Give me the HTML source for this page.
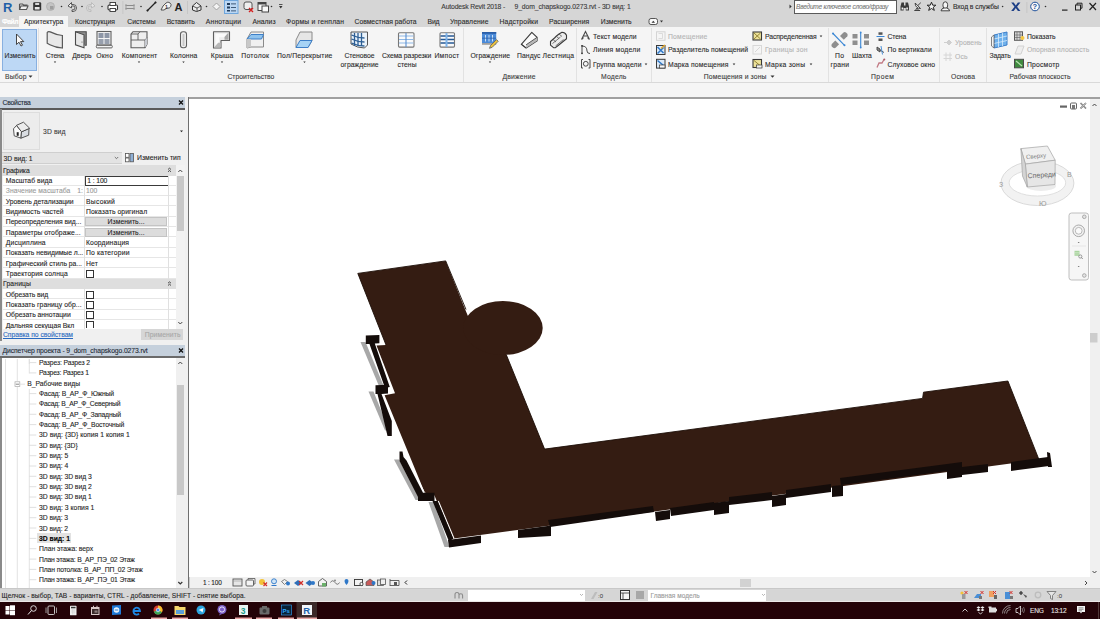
<!DOCTYPE html>
<html><head><meta charset="utf-8"><style>
html,body{margin:0;padding:0;}
body{width:1100px;height:619px;overflow:hidden;position:relative;background:#f0f0f0;font-family:"Liberation Sans",sans-serif;}
.t{position:absolute;white-space:nowrap;-webkit-text-stroke:0.1px currentColor;}
.r{position:absolute;}
</style></head><body>
<div class="r" style="left:0px;top:0px;width:1100px;height:27px;background:#d6d6d6;"></div>
<div class="r" style="left:19px;top:16px;width:49px;height:11px;background:#f5f5f5;"></div>
<div class="r" style="left:0px;top:27px;width:1100px;height:56px;background:#f5f5f5;"></div>
<div class="r" style="left:0px;top:82px;width:1100px;height:1px;background:#d9d9d9;"></div>
<div class="r" style="left:0px;top:83px;width:1100px;height:14px;background:#f5f5f5;"></div>
<div class="r" style="left:0px;top:97px;width:188px;height:491px;background:#f0f0f0;"></div>
<div class="r" style="left:0px;top:97px;width:185px;height:12px;background:#c5d0dc;"></div>
<div class="r" style="left:0px;top:340px;width:185px;height:5px;background:#f0f0f0;"></div>
<div class="r" style="left:0px;top:345px;width:185px;height:11.5px;background:#c5d0dc;"></div>
<div class="r" style="left:188px;top:97px;width:912px;height:491px;background:#ffffff;"></div>
<div class="r" style="left:188px;top:97px;width:912px;height:2px;background:#a0a0a0;"></div>
<div class="r" style="left:188px;top:97px;width:1.3px;height:491px;background:#6e6e6e;"></div>
<div class="r" style="left:1090px;top:99px;width:10px;height:480px;background:#f0f0f0;"></div>
<div class="r" style="left:189px;top:577px;width:911px;height:11px;background:#f0f0f0;"></div>
<div class="r" style="left:0px;top:588px;width:1100px;height:14px;background:#d6d6d6;"></div>
<div class="r" style="left:0px;top:600.5px;width:1100px;height:1.5px;background:#ece8e8;"></div>
<div class="r" style="left:0px;top:588px;width:1100px;height:1px;background:#c8c8c8;"></div>
<div class="r" style="left:0px;top:602px;width:1100px;height:17px;background:#240308;"></div>
<div class="t" style="left:441.25px;top:4.46px;font-size:6.8px;line-height:6.8px;color:#3a3a3a;font-weight:normal;font-style:normal;letter-spacing:-0.144px;">Autodesk Revit 2018 -</div>
<div class="t" style="left:514.5px;top:4.46px;font-size:6.8px;line-height:6.8px;color:#3a3a3a;font-weight:normal;font-style:normal;letter-spacing:-0.093px;">9_dom_chapskogo.0273.rvt - 3D вид: 1</div>
<div class="r" style="left:794px;top:0px;width:103px;height:13.5px;background:#ffffff;box-sizing:border-box;border:1px solid #5a5a5a;"></div>
<div class="t" style="left:796px;top:4.42px;font-size:6.5px;line-height:6.5px;color:#777777;font-weight:normal;font-style:italic;letter-spacing:-0.195px;">Введите ключевое слово/фразу</div>
<div class="t" style="left:953px;top:4.46px;font-size:6.8px;line-height:6.8px;color:#2a2a2a;font-weight:normal;font-style:normal;letter-spacing:-0.090px;">Вход в службы</div>
<div class="t" style="left:2px;top:18.96px;font-size:6.8px;line-height:6.8px;color:#ffffff;font-weight:bold;font-style:normal;letter-spacing:-0.495px;">Файл</div>
<div class="t" style="left:24px;top:18.96px;font-size:6.8px;line-height:6.8px;color:#2b2b2b;font-weight:normal;font-style:normal;letter-spacing:-0.007px;">Архитектура</div>
<div class="t" style="left:75px;top:18.96px;font-size:6.8px;line-height:6.8px;color:#2b2b2b;font-weight:normal;font-style:normal;letter-spacing:0.059px;">Конструкция</div>
<div class="t" style="left:127.3px;top:18.96px;font-size:6.8px;line-height:6.8px;color:#2b2b2b;font-weight:normal;font-style:normal;letter-spacing:-0.026px;">Системы</div>
<div class="t" style="left:166.7px;top:18.96px;font-size:6.8px;line-height:6.8px;color:#2b2b2b;font-weight:normal;font-style:normal;letter-spacing:-0.114px;">Вставить</div>
<div class="t" style="left:205.8px;top:18.96px;font-size:6.8px;line-height:6.8px;color:#2b2b2b;font-weight:normal;font-style:normal;letter-spacing:0.146px;">Аннотации</div>
<div class="t" style="left:252.4px;top:18.96px;font-size:6.8px;line-height:6.8px;color:#2b2b2b;font-weight:normal;font-style:normal;letter-spacing:0.041px;">Анализ</div>
<div class="t" style="left:286px;top:18.96px;font-size:6.8px;line-height:6.8px;color:#2b2b2b;font-weight:normal;font-style:normal;letter-spacing:0.230px;">Формы и генплан</div>
<div class="t" style="left:354.5px;top:18.96px;font-size:6.8px;line-height:6.8px;color:#2b2b2b;font-weight:normal;font-style:normal;letter-spacing:-0.006px;">Совместная работа</div>
<div class="t" style="left:427.5px;top:18.96px;font-size:6.8px;line-height:6.8px;color:#2b2b2b;font-weight:normal;font-style:normal;letter-spacing:-0.149px;">Вид</div>
<div class="t" style="left:450px;top:18.96px;font-size:6.8px;line-height:6.8px;color:#2b2b2b;font-weight:normal;font-style:normal;letter-spacing:0.080px;">Управление</div>
<div class="t" style="left:499.5px;top:18.96px;font-size:6.8px;line-height:6.8px;color:#2b2b2b;font-weight:normal;font-style:normal;letter-spacing:0.130px;">Надстройки</div>
<div class="t" style="left:549px;top:18.96px;font-size:6.8px;line-height:6.8px;color:#2b2b2b;font-weight:normal;font-style:normal;letter-spacing:0.082px;">Расширения</div>
<div class="t" style="left:600.75px;top:18.96px;font-size:6.8px;line-height:6.8px;color:#2b2b2b;font-weight:normal;font-style:normal;letter-spacing:0.022px;">Изменить</div>
<div class="t" style="left:5.1px;top:73.96px;font-size:6.8px;line-height:6.8px;color:#3c3c3c;font-weight:normal;font-style:normal;letter-spacing:0.125px;">Выбор</div>
<div class="t" style="left:227.5px;top:73.96px;font-size:6.8px;line-height:6.8px;color:#3c3c3c;font-weight:normal;font-style:normal;letter-spacing:-0.036px;">Строительство</div>
<div class="t" style="left:502.5px;top:73.96px;font-size:6.8px;line-height:6.8px;color:#3c3c3c;font-weight:normal;font-style:normal;letter-spacing:0.179px;">Движение</div>
<div class="t" style="left:601px;top:73.96px;font-size:6.8px;line-height:6.8px;color:#3c3c3c;font-weight:normal;font-style:normal;letter-spacing:0.199px;">Модель</div>
<div class="t" style="left:703.75px;top:73.96px;font-size:6.8px;line-height:6.8px;color:#3c3c3c;font-weight:normal;font-style:normal;letter-spacing:0.135px;">Помещения и зоны</div>
<div class="t" style="left:871px;top:73.96px;font-size:6.8px;line-height:6.8px;color:#3c3c3c;font-weight:normal;font-style:normal;letter-spacing:0.489px;">Проем</div>
<div class="t" style="left:951px;top:73.96px;font-size:6.8px;line-height:6.8px;color:#3c3c3c;font-weight:normal;font-style:normal;letter-spacing:0.092px;">Основа</div>
<div class="t" style="left:1009.5px;top:73.96px;font-size:6.8px;line-height:6.8px;color:#3c3c3c;font-weight:normal;font-style:normal;letter-spacing:0.047px;">Рабочая плоскость</div>
<div class="r" style="left:38px;top:28px;width:1px;height:54px;background:#e2e2e2;"></div>
<div class="r" style="left:462.5px;top:28px;width:1px;height:54px;background:#e2e2e2;"></div>
<div class="r" style="left:576px;top:28px;width:1px;height:54px;background:#e2e2e2;"></div>
<div class="r" style="left:651px;top:28px;width:1px;height:54px;background:#e2e2e2;"></div>
<div class="r" style="left:827.5px;top:28px;width:1px;height:54px;background:#e2e2e2;"></div>
<div class="r" style="left:938.5px;top:28px;width:1px;height:54px;background:#e2e2e2;"></div>
<div class="r" style="left:986px;top:28px;width:1px;height:54px;background:#e2e2e2;"></div>
<div class="r" style="left:2px;top:29px;width:35px;height:41.5px;background:#bdd8f5;box-sizing:border-box;border:1px solid #88b0e0;"></div>
<div class="t" style="left:4.5px;top:52.96px;font-size:6.8px;line-height:6.8px;color:#2b2b2b;font-weight:normal;font-style:normal;letter-spacing:0.054px;">Изменить</div>
<div class="t" style="left:45.8px;top:52.96px;font-size:6.8px;line-height:6.8px;color:#2b2b2b;font-weight:normal;font-style:normal;letter-spacing:-0.173px;">Стена</div>
<div class="t" style="left:72.2px;top:52.96px;font-size:6.8px;line-height:6.8px;color:#2b2b2b;font-weight:normal;font-style:normal;letter-spacing:0.030px;">Дверь</div>
<div class="t" style="left:96.3px;top:52.96px;font-size:6.8px;line-height:6.8px;color:#2b2b2b;font-weight:normal;font-style:normal;letter-spacing:0.276px;">Окно</div>
<div class="t" style="left:121.75px;top:52.96px;font-size:6.8px;line-height:6.8px;color:#2b2b2b;font-weight:normal;font-style:normal;letter-spacing:0.147px;">Компонент</div>
<div class="t" style="left:170px;top:52.96px;font-size:6.8px;line-height:6.8px;color:#2b2b2b;font-weight:normal;font-style:normal;letter-spacing:0.092px;">Колонна</div>
<div class="t" style="left:210.75px;top:52.96px;font-size:6.8px;line-height:6.8px;color:#2b2b2b;font-weight:normal;font-style:normal;letter-spacing:0.198px;">Крыша</div>
<div class="t" style="left:241.25px;top:52.96px;font-size:6.8px;line-height:6.8px;color:#2b2b2b;font-weight:normal;font-style:normal;letter-spacing:0.302px;">Потолок</div>
<div class="t" style="left:277px;top:52.96px;font-size:6.8px;line-height:6.8px;color:#2b2b2b;font-weight:normal;font-style:normal;letter-spacing:0.190px;">Пол/Перекрытие</div>
<div class="t" style="left:434.5px;top:52.96px;font-size:6.8px;line-height:6.8px;color:#2b2b2b;font-weight:normal;font-style:normal;letter-spacing:0.220px;">Импост</div>
<div class="t" style="left:470.5px;top:52.96px;font-size:6.8px;line-height:6.8px;color:#2b2b2b;font-weight:normal;font-style:normal;letter-spacing:0.065px;">Ограждение</div>
<div class="t" style="left:517px;top:52.96px;font-size:6.8px;line-height:6.8px;color:#2b2b2b;font-weight:normal;font-style:normal;letter-spacing:0.082px;">Пандус</div>
<div class="t" style="left:542.5px;top:52.96px;font-size:6.8px;line-height:6.8px;color:#2b2b2b;font-weight:normal;font-style:normal;letter-spacing:0.233px;">Лестница</div>
<div class="t" style="left:852px;top:52.96px;font-size:6.8px;line-height:6.8px;color:#2b2b2b;font-weight:normal;font-style:normal;letter-spacing:-0.061px;">Шахта</div>
<div class="t" style="left:989.5px;top:52.96px;font-size:6.8px;line-height:6.8px;color:#2b2b2b;font-weight:normal;font-style:normal;letter-spacing:-0.173px;">Задать</div>
<div class="t" style="left:344.5px;top:52.96px;font-size:6.8px;line-height:6.8px;color:#2b2b2b;font-weight:normal;font-style:normal;letter-spacing:-0.064px;">Стеновое</div>
<div class="t" style="left:340.5px;top:61.96px;font-size:6.8px;line-height:6.8px;color:#2b2b2b;font-weight:normal;font-style:normal;letter-spacing:0.065px;">ограждение</div>
<div class="t" style="left:382px;top:52.96px;font-size:6.8px;line-height:6.8px;color:#2b2b2b;font-weight:normal;font-style:normal;letter-spacing:-0.082px;">Схема разрезки</div>
<div class="t" style="left:397.5px;top:61.96px;font-size:6.8px;line-height:6.8px;color:#2b2b2b;font-weight:normal;font-style:normal;letter-spacing:0.048px;">стены</div>
<div class="t" style="left:835px;top:52.96px;font-size:6.8px;line-height:6.8px;color:#2b2b2b;font-weight:normal;font-style:normal;letter-spacing:0.339px;">По</div>
<div class="t" style="left:830.5px;top:61.96px;font-size:6.8px;line-height:6.8px;color:#2b2b2b;font-weight:normal;font-style:normal;letter-spacing:0.251px;">грани</div>
<div class="t" style="left:593px;top:33.76px;font-size:6.8px;line-height:6.8px;color:#2b2b2b;font-weight:normal;font-style:normal;letter-spacing:0.084px;">Текст модели</div>
<div class="t" style="left:593px;top:47.46px;font-size:6.8px;line-height:6.8px;color:#2b2b2b;font-weight:normal;font-style:normal;letter-spacing:0.202px;">Линия  модели</div>
<div class="t" style="left:593px;top:61.76px;font-size:6.8px;line-height:6.8px;color:#2b2b2b;font-weight:normal;font-style:normal;letter-spacing:0.121px;">Группа модели</div>
<div class="t" style="left:668px;top:33.76px;font-size:6.8px;line-height:6.8px;color:#b4b4b4;font-weight:normal;font-style:normal;letter-spacing:0.206px;">Помещение</div>
<div class="t" style="left:668px;top:47.46px;font-size:6.8px;line-height:6.8px;color:#2b2b2b;font-weight:normal;font-style:normal;letter-spacing:0.061px;">Разделитель помещений</div>
<div class="t" style="left:668px;top:61.76px;font-size:6.8px;line-height:6.8px;color:#2b2b2b;font-weight:normal;font-style:normal;letter-spacing:0.138px;">Марка помещения</div>
<div class="t" style="left:765px;top:33.76px;font-size:6.8px;line-height:6.8px;color:#2b2b2b;font-weight:normal;font-style:normal;letter-spacing:-0.087px;">Распределенная</div>
<div class="t" style="left:765px;top:47.46px;font-size:6.8px;line-height:6.8px;color:#b4b4b4;font-weight:normal;font-style:normal;letter-spacing:0.287px;">Границы  зон</div>
<div class="t" style="left:765px;top:61.76px;font-size:6.8px;line-height:6.8px;color:#2b2b2b;font-weight:normal;font-style:normal;letter-spacing:0.276px;">Марка  зоны</div>
<div class="t" style="left:887.5px;top:33.76px;font-size:6.8px;line-height:6.8px;color:#2b2b2b;font-weight:normal;font-style:normal;letter-spacing:-0.133px;">Стена</div>
<div class="t" style="left:887.5px;top:47.46px;font-size:6.8px;line-height:6.8px;color:#2b2b2b;font-weight:normal;font-style:normal;letter-spacing:0.106px;">По вертикали</div>
<div class="t" style="left:887.5px;top:61.76px;font-size:6.8px;line-height:6.8px;color:#2b2b2b;font-weight:normal;font-style:normal;letter-spacing:0.073px;">Слуховое окно</div>
<div class="t" style="left:955px;top:40.46px;font-size:6.8px;line-height:6.8px;color:#b4b4b4;font-weight:normal;font-style:normal;letter-spacing:0.059px;">Уровень</div>
<div class="t" style="left:955px;top:54.46px;font-size:6.8px;line-height:6.8px;color:#b4b4b4;font-weight:normal;font-style:normal;letter-spacing:0.122px;">Ось</div>
<div class="t" style="left:1027px;top:33.76px;font-size:6.8px;line-height:6.8px;color:#2b2b2b;font-weight:normal;font-style:normal;letter-spacing:-0.038px;">Показать</div>
<div class="t" style="left:1027px;top:47.46px;font-size:6.8px;line-height:6.8px;color:#b4b4b4;font-weight:normal;font-style:normal;letter-spacing:0.055px;">Опорная плоскость</div>
<div class="t" style="left:1027px;top:61.76px;font-size:6.8px;line-height:6.8px;color:#2b2b2b;font-weight:normal;font-style:normal;letter-spacing:0.194px;">Просмотр</div>
<div class="t" style="left:2.5px;top:100.46px;font-size:6.8px;line-height:6.8px;color:#1e2a36;font-weight:normal;font-style:normal;letter-spacing:-0.220px;">Свойства</div>
<div class="r" style="left:0px;top:108px;width:185px;height:1.5px;background:#5a5a5a;"></div>
<div class="r" style="left:0px;top:109px;width:1.5px;height:232px;background:#8a8a8a;"></div>
<div class="r" style="left:1.5px;top:109.5px;width:183.5px;height:42.5px;background:#f0f0f0;"></div>
<div class="r" style="left:3px;top:112px;width:37px;height:37.5px;background:#ececec;box-sizing:border-box;border:1px solid #dddddd;"></div>
<div class="t" style="left:43px;top:128.96px;font-size:6.8px;line-height:6.8px;color:#3a3a3a;font-weight:normal;font-style:normal;letter-spacing:0.108px;">3D вид</div>
<div class="r" style="left:1.5px;top:152px;width:120px;height:12px;background:#e3e3e3;box-sizing:border-box;border-top:1px solid #cfcfcf;border-bottom:1px solid #cfcfcf;"></div>
<div class="t" style="left:3.5px;top:155.96px;font-size:6.8px;line-height:6.8px;color:#1e1e1e;font-weight:normal;font-style:normal;letter-spacing:-0.046px;">3D вид: 1</div>
<div class="t" style="left:137px;top:155.46px;font-size:6.8px;line-height:6.8px;color:#1e1e1e;font-weight:normal;font-style:normal;letter-spacing:0.038px;">Изменить тип</div>
<div class="r" style="left:1.5px;top:165px;width:175px;height:10.5px;background:#dedede;"></div>
<div class="t" style="left:3px;top:167.96px;font-size:6.8px;line-height:6.8px;color:#1e1e1e;font-weight:normal;font-style:normal;letter-spacing:-0.079px;">Графика</div>
<div class="r" style="left:3px;top:175.5px;width:173px;height:103.0px;background:#ffffff;"></div>
<div class="r" style="left:3px;top:184.8px;width:173px;height:1px;background:#e6e6e6;"></div>
<div class="t" style="left:5.8px;top:178.11px;font-size:6.8px;line-height:6.8px;color:#1e1e1e;font-weight:normal;font-style:normal;letter-spacing:0.031px;">Масштаб вида</div>
<div class="t" style="left:87.2px;top:178.11px;font-size:6.8px;line-height:6.8px;color:#1e1e1e;font-weight:normal;font-style:normal;letter-spacing:-0.100px;">1 : 100</div>
<div class="r" style="left:3px;top:195.10000000000002px;width:173px;height:1px;background:#e6e6e6;"></div>
<div class="t" style="left:5.8px;top:188.41px;font-size:6.8px;line-height:6.8px;color:#9a9a9a;font-weight:normal;font-style:normal;letter-spacing:0.055px;">Значение масштаба</div>
<div class="t" style="left:86px;top:188.41px;font-size:6.8px;line-height:6.8px;color:#9a9a9a;font-weight:normal;font-style:normal;letter-spacing:-0.048px;">100</div>
<div class="r" style="left:3px;top:205.4px;width:173px;height:1px;background:#e6e6e6;"></div>
<div class="t" style="left:5.8px;top:198.71px;font-size:6.8px;line-height:6.8px;color:#1e1e1e;font-weight:normal;font-style:normal;letter-spacing:-0.040px;">Уровень детализации</div>
<div class="t" style="left:86px;top:198.71px;font-size:6.8px;line-height:6.8px;color:#1e1e1e;font-weight:normal;font-style:normal;letter-spacing:0.264px;">Высокий</div>
<div class="r" style="left:3px;top:215.70000000000002px;width:173px;height:1px;background:#e6e6e6;"></div>
<div class="t" style="left:5.8px;top:209.01px;font-size:6.8px;line-height:6.8px;color:#1e1e1e;font-weight:normal;font-style:normal;letter-spacing:-0.002px;">Видимость частей</div>
<div class="t" style="left:86px;top:209.01px;font-size:6.8px;line-height:6.8px;color:#1e1e1e;font-weight:normal;font-style:normal;letter-spacing:0.075px;">Показать оригинал</div>
<div class="r" style="left:3px;top:226.0px;width:173px;height:1px;background:#e6e6e6;"></div>
<div class="t" style="left:5.8px;top:219.31px;font-size:6.8px;line-height:6.8px;color:#1e1e1e;font-weight:normal;font-style:normal;letter-spacing:-0.047px;">Переопределения вид...</div>
<div class="r" style="left:85px;top:217.2px;width:82px;height:9.3px;background:#dcdcdc;box-sizing:border-box;border:1px solid #c4c4c4;"></div>
<div class="t" style="left:107.5px;top:219.31px;font-size:6.8px;line-height:6.8px;color:#1e1e1e;font-weight:normal;font-style:normal;letter-spacing:0.070px;">Изменить...</div>
<div class="r" style="left:3px;top:236.3px;width:173px;height:1px;background:#e6e6e6;"></div>
<div class="t" style="left:5.8px;top:229.61px;font-size:6.8px;line-height:6.8px;color:#1e1e1e;font-weight:normal;font-style:normal;letter-spacing:0.042px;">Параметры отображе...</div>
<div class="r" style="left:85px;top:227.5px;width:82px;height:9.3px;background:#dcdcdc;box-sizing:border-box;border:1px solid #c4c4c4;"></div>
<div class="t" style="left:107.5px;top:229.61px;font-size:6.8px;line-height:6.8px;color:#1e1e1e;font-weight:normal;font-style:normal;letter-spacing:0.070px;">Изменить...</div>
<div class="r" style="left:3px;top:246.60000000000002px;width:173px;height:1px;background:#e6e6e6;"></div>
<div class="t" style="left:5.8px;top:239.91px;font-size:6.8px;line-height:6.8px;color:#1e1e1e;font-weight:normal;font-style:normal;letter-spacing:0.153px;">Дисциплина</div>
<div class="t" style="left:86px;top:239.91px;font-size:6.8px;line-height:6.8px;color:#1e1e1e;font-weight:normal;font-style:normal;letter-spacing:0.117px;">Координация</div>
<div class="r" style="left:3px;top:256.90000000000003px;width:173px;height:1px;background:#e6e6e6;"></div>
<div class="t" style="left:5.8px;top:250.21px;font-size:6.8px;line-height:6.8px;color:#1e1e1e;font-weight:normal;font-style:normal;letter-spacing:-0.041px;">Показать невидимые л...</div>
<div class="t" style="left:86px;top:250.21px;font-size:6.8px;line-height:6.8px;color:#1e1e1e;font-weight:normal;font-style:normal;letter-spacing:0.166px;">По категории</div>
<div class="r" style="left:3px;top:267.2px;width:173px;height:1px;background:#e6e6e6;"></div>
<div class="t" style="left:5.8px;top:260.51px;font-size:6.8px;line-height:6.8px;color:#1e1e1e;font-weight:normal;font-style:normal;letter-spacing:-0.007px;">Графический стиль ра...</div>
<div class="t" style="left:86px;top:260.51px;font-size:6.8px;line-height:6.8px;color:#1e1e1e;font-weight:normal;font-style:normal;letter-spacing:0.107px;">Нет</div>
<div class="r" style="left:3px;top:277.5px;width:173px;height:1px;background:#e6e6e6;"></div>
<div class="t" style="left:5.8px;top:270.81px;font-size:6.8px;line-height:6.8px;color:#1e1e1e;font-weight:normal;font-style:normal;letter-spacing:0.081px;">Траектория солнца</div>
<div class="r" style="left:86px;top:269.7px;width:8px;height:8px;background:#ffffff;box-sizing:border-box;border:1px solid #333333;"></div>
<div class="t" style="left:77.3px;top:188.41px;font-size:6.8px;line-height:6.8px;color:#9a9a9a;font-weight:normal;font-style:normal;letter-spacing:-0.186px;">1:</div>
<div class="r" style="left:85px;top:176px;width:83.5px;height:10px;background:transparent;box-sizing:border-box;border:1.5px solid #3a3a3a;"></div>
<div class="r" style="left:84px;top:175.5px;width:1px;height:103.0px;background:#e0e0e0;"></div>
<div class="r" style="left:168px;top:175.5px;width:1px;height:103.0px;background:#e0e0e0;"></div>
<div class="r" style="left:1.5px;top:278.5px;width:175px;height:10.5px;background:#dedede;"></div>
<div class="t" style="left:3px;top:281.46px;font-size:6.8px;line-height:6.8px;color:#1e1e1e;font-weight:normal;font-style:normal;letter-spacing:0.130px;">Границы</div>
<div class="r" style="left:3px;top:289.0px;width:173px;height:39.5px;background:#ffffff;"></div>
<div class="r" style="left:3px;top:298.3px;width:173px;height:1px;background:#e6e6e6;"></div>
<div class="t" style="left:5.8px;top:291.61px;font-size:6.8px;line-height:6.8px;color:#1e1e1e;font-weight:normal;font-style:normal;letter-spacing:-0.080px;">Обрезать вид</div>
<div class="r" style="left:86px;top:290.5px;width:8px;height:8px;background:#ffffff;box-sizing:border-box;border:1px solid #333333;"></div>
<div class="r" style="left:3px;top:308.6px;width:173px;height:1px;background:#e6e6e6;"></div>
<div class="t" style="left:5.8px;top:301.91px;font-size:6.8px;line-height:6.8px;color:#1e1e1e;font-weight:normal;font-style:normal;letter-spacing:0.049px;">Показать границу обр...</div>
<div class="r" style="left:86px;top:300.8px;width:8px;height:8px;background:#ffffff;box-sizing:border-box;border:1px solid #333333;"></div>
<div class="r" style="left:3px;top:318.90000000000003px;width:173px;height:1px;background:#e6e6e6;"></div>
<div class="t" style="left:5.8px;top:312.21px;font-size:6.8px;line-height:6.8px;color:#1e1e1e;font-weight:normal;font-style:normal;letter-spacing:-0.012px;">Обрезать аннотации</div>
<div class="r" style="left:86px;top:311.1px;width:8px;height:8px;background:#ffffff;box-sizing:border-box;border:1px solid #333333;"></div>
<div class="t" style="left:5.8px;top:322.51px;font-size:6.8px;line-height:6.8px;color:#1e1e1e;font-weight:normal;font-style:normal;letter-spacing:-0.038px;">Дальняя секущая Вкл</div>
<div class="r" style="left:86px;top:321.4px;width:8px;height:7.100000000000023px;background:#ffffff;box-sizing:border-box;border:1px solid #333333;border-bottom:none;"></div>
<div class="r" style="left:84px;top:289.0px;width:1px;height:39.5px;background:#e0e0e0;"></div>
<div class="r" style="left:168px;top:289.0px;width:1px;height:39.5px;background:#e0e0e0;"></div>
<div class="r" style="left:1.5px;top:328.5px;width:183.5px;height:12px;background:#f0f0f0;"></div>
<div class="t" style="left:3px;top:331.96px;font-size:6.8px;line-height:6.8px;color:#2a6ac0;font-weight:normal;font-style:normal;letter-spacing:-0.046px;text-decoration:underline;">Справка по свойствам</div>
<div class="r" style="left:141px;top:328.5px;width:42px;height:11.5px;background:#d6d6d6;"></div>
<div class="t" style="left:144.8px;top:331.96px;font-size:6.8px;line-height:6.8px;color:#a8a8a8;font-weight:normal;font-style:normal;letter-spacing:0.064px;">Применить</div>
<div class="r" style="left:176px;top:165px;width:9px;height:163.5px;background:#f2f2f2;"></div>
<div class="r" style="left:177px;top:176px;width:7px;height:55px;background:#c8c8c8;"></div>
<div class="t" style="left:2.5px;top:348.46px;font-size:6.8px;line-height:6.8px;color:#1e2a36;font-weight:normal;font-style:normal;letter-spacing:-0.110px;">Диспетчер проекта - 9_dom_chapskogo.0273.rvt</div>
<div class="r" style="left:0px;top:356px;width:185px;height:1.5px;background:#6a6a6a;"></div>
<div class="r" style="left:0px;top:357.5px;width:1.5px;height:230.5px;background:#8a8a8a;"></div>
<div class="r" style="left:1.5px;top:357.5px;width:174.5px;height:230.5px;background:#ffffff;"></div>
<div class="r" style="left:176px;top:357.5px;width:9px;height:230.5px;background:#f0f0f0;"></div>
<div class="r" style="left:177px;top:385px;width:7px;height:110px;background:#c8c8c8;"></div>
<div class="t" style="left:39px;top:360.06px;font-size:6.8px;line-height:6.8px;color:#1e1e1e;font-weight:normal;font-style:normal;letter-spacing:-0.117px;">Разрез: Разрез 2</div>
<div class="t" style="left:39px;top:370.40px;font-size:6.8px;line-height:6.8px;color:#1e1e1e;font-weight:normal;font-style:normal;letter-spacing:-0.185px;">Разрез: Разрез 1</div>
<div class="t" style="left:27.3px;top:380.74px;font-size:6.8px;line-height:6.8px;color:#1e1e1e;font-weight:normal;font-style:normal;letter-spacing:-0.036px;">В_Рабочие виды</div>
<div class="t" style="left:39px;top:391.08px;font-size:6.8px;line-height:6.8px;color:#1e1e1e;font-weight:normal;font-style:normal;letter-spacing:-0.149px;">Фасад: В_АР_Ф_Южный</div>
<div class="t" style="left:39px;top:401.42px;font-size:6.8px;line-height:6.8px;color:#1e1e1e;font-weight:normal;font-style:normal;letter-spacing:-0.223px;">Фасад: В_АР_Ф_Северный</div>
<div class="t" style="left:39px;top:411.76px;font-size:6.8px;line-height:6.8px;color:#1e1e1e;font-weight:normal;font-style:normal;letter-spacing:-0.179px;">Фасад: В_АР_Ф_Западный</div>
<div class="t" style="left:39px;top:422.10px;font-size:6.8px;line-height:6.8px;color:#1e1e1e;font-weight:normal;font-style:normal;letter-spacing:-0.141px;">Фасад: В_АР_Ф_Восточный</div>
<div class="t" style="left:39px;top:432.44px;font-size:6.8px;line-height:6.8px;color:#1e1e1e;font-weight:normal;font-style:normal;letter-spacing:0.027px;">3D вид: {3D} копия 1 копия 1</div>
<div class="t" style="left:39px;top:442.78px;font-size:6.8px;line-height:6.8px;color:#1e1e1e;font-weight:normal;font-style:normal;letter-spacing:-0.022px;">3D вид: {3D}</div>
<div class="t" style="left:39px;top:453.12px;font-size:6.8px;line-height:6.8px;color:#1e1e1e;font-weight:normal;font-style:normal;letter-spacing:-0.035px;">3D вид: 5</div>
<div class="t" style="left:39px;top:463.46px;font-size:6.8px;line-height:6.8px;color:#1e1e1e;font-weight:normal;font-style:normal;letter-spacing:-0.035px;">3D вид: 4</div>
<div class="t" style="left:39px;top:473.80px;font-size:6.8px;line-height:6.8px;color:#1e1e1e;font-weight:normal;font-style:normal;letter-spacing:-0.041px;">3D вид: 3D вид 3</div>
<div class="t" style="left:39px;top:484.14px;font-size:6.8px;line-height:6.8px;color:#1e1e1e;font-weight:normal;font-style:normal;letter-spacing:-0.041px;">3D вид: 3D вид 2</div>
<div class="t" style="left:39px;top:494.48px;font-size:6.8px;line-height:6.8px;color:#1e1e1e;font-weight:normal;font-style:normal;letter-spacing:-0.041px;">3D вид: 3D вид 1</div>
<div class="t" style="left:39px;top:504.82px;font-size:6.8px;line-height:6.8px;color:#1e1e1e;font-weight:normal;font-style:normal;letter-spacing:0.014px;">3D вид: 3 копия 1</div>
<div class="t" style="left:39px;top:515.16px;font-size:6.8px;line-height:6.8px;color:#1e1e1e;font-weight:normal;font-style:normal;letter-spacing:-0.046px;">3D вид: 3</div>
<div class="t" style="left:39px;top:525.50px;font-size:6.8px;line-height:6.8px;color:#1e1e1e;font-weight:normal;font-style:normal;letter-spacing:-0.046px;">3D вид: 2</div>
<div class="r" style="left:37px;top:533.38px;width:34px;height:10px;background:#e2e2e2;"></div>
<div class="t" style="left:39px;top:535.84px;font-size:6.8px;line-height:6.8px;color:#000000;font-weight:bold;font-style:normal;letter-spacing:-0.032px;">3D вид: 1</div>
<div class="t" style="left:39px;top:546.18px;font-size:6.8px;line-height:6.8px;color:#1e1e1e;font-weight:normal;font-style:normal;letter-spacing:-0.059px;">План этажа: верх</div>
<div class="t" style="left:39px;top:556.52px;font-size:6.8px;line-height:6.8px;color:#1e1e1e;font-weight:normal;font-style:normal;letter-spacing:-0.197px;">План этажа: В_АР_ПЭ_02 Этаж</div>
<div class="t" style="left:39px;top:566.86px;font-size:6.8px;line-height:6.8px;color:#1e1e1e;font-weight:normal;font-style:normal;letter-spacing:-0.128px;">План потолка: В_АР_ПП_02 Этаж</div>
<div class="t" style="left:39px;top:577.20px;font-size:6.8px;line-height:6.8px;color:#1e1e1e;font-weight:normal;font-style:normal;letter-spacing:-0.186px;">План этажа: В_АР_ПЭ_01 Этаж</div>
<svg class="r" style="left:0px;top:0px;pointer-events:none;" width="1100" height="619" viewBox="0 0 1100 619"><polygon fill="#a8a8a8" points="360.5,342 365.5,342 384.5,388 380,388.5"/><polygon fill="#a8a8a8" points="368.5,391.5 373.5,391.5 389,430 385,430.5"/><polygon fill="#a8a8a8" points="394,459.5 399,459.5 420,500 415.5,500"/><polygon fill="#a8a8a8" points="428.5,502 433.5,502 449.5,547 444.5,547"/><path fill="#341c12" d="M357.8,273.4 L445.7,260.9 L465.1,309.2 L470,321 L506.2,354.5 L544.6,449.1 L922.6,398.4 L923.5,392.2 L1007.9,381 L1039,459.7 L452,538.8 L434.5,495.5 L424.7,492.5 L384.6,395.3 L395,393.2 L376.5,345.5 L386,345 Z"/><ellipse fill="#341c12" cx="503" cy="328" rx="39.7" ry="27"/><polyline fill="none" stroke="#1c0d07" stroke-width="0.9" points="357.8,273.4 445.7,260.9 466,309.5"/><polyline fill="none" stroke="#1c0d07" stroke-width="0.9" points="506.2,354.5 544.6,449.1 922.6,398.4 923.5,392.2 1007.9,381 1039,459.7"/><polyline fill="none" stroke="#1c0d07" stroke-width="0.9" points="357.8,273.4 386,345"/><polygon fill="#140c0a" points="365.8,335.5 379.4,335 379.4,343.3 374.8,343.5 389.8,387 385,388 369.5,344 365.8,344"/><polygon fill="#140c0a" points="375.5,385.2 388,384.8 388,393.5 381.5,394 391.8,421 391.8,436 387.5,436 377.5,394 375.5,394"/><polyline fill="none" stroke="#ffffff" stroke-width="1.3" points="407.5,461 424,492"/><polyline fill="none" stroke="#ffffff" stroke-width="1.1" points="438.3,501 454,538.5"/><polygon fill="#140c0a" points="399.5,451.5 402.5,451.5 403.5,457 406.5,460.5 423,492.8 434.5,492.8 434.5,501 437.5,501 453.2,538.8 449,541.5 432.5,501 418,501 418,497 399.5,461"/><polygon fill="#140c0a" points="448,540 481,535.5 481,543 449,547.5"/><polygon fill="#140c0a" points="518,530 551,525.5 551,536 518,538"/><polygon fill="#140c0a" points="548,520 653,506 654,512 550,527"/><polygon fill="#140c0a" points="655,512 670,510 670,519 656,521"/><polygon fill="#140c0a" points="670,508 714,502 714,510 671,516"/><polygon fill="#140c0a" points="714,503 729,501 729,513 714,515"/><polygon fill="#140c0a" points="729,497 772,492 772,500 729,505"/><polygon fill="#140c0a" points="772,496 786,494 786,505 772,507"/><polygon fill="#140c0a" points="786,490 831,484 831,492 786,498"/><polygon fill="#140c0a" points="832,486 843,485 843,496 832,497"/><polygon fill="#140c0a" points="840,478 947,464 947,471 841,485"/><polygon fill="#140c0a" points="947,464 962,462 962,477 947,479"/><polygon fill="#140c0a" points="962,467 988,464 988,472 962,475"/><polygon fill="#140c0a" points="1011,462 1048,457 1049,466 1011,471"/><polygon fill="#140c0a" points="1047,452 1050,453 1052,467 1048,467"/></svg>
<svg class="r" style="left:0px;top:0px;pointer-events:none;" width="1100" height="97" viewBox="0 0 1100 97"><text x="3" y="12" font-family="Liberation Sans" font-weight="bold" font-size="13" fill="#1f5fa8">R</text><path d="M19.5,4 h3 l1,1 h3.5 v1.5 M19.5,4 v5.5 h7 l1.5,-3.5 h-7 l-1.5,3.5" fill="#f0f0f0" stroke="#555" stroke-width="1.1"/><rect x="33.2" y="2.2" width="8" height="8.3" rx="1.2" fill="#333"/><rect x="35.2" y="3" width="4" height="2" fill="#d8d8d8"/><rect x="34.8" y="7" width="4.8" height="2.5" fill="#e8e8e8"/><circle cx="50.5" cy="6.5" r="4" fill="#c4c4c4" stroke="#adadad" stroke-width="0.8"/><rect x="50" y="6" width="3.5" height="3.5" fill="#9e9e9e"/><circle cx="61.5" cy="6.5" r="0.8" fill="#333"/><circle cx="82" cy="6.5" r="0.8" fill="#333"/><circle cx="102" cy="6.5" r="0.8" fill="#333"/><circle cx="141" cy="6.5" r="0.8" fill="#333"/><circle cx="206.5" cy="6.5" r="0.8" fill="#333"/><circle cx="271.5" cy="6.5" r="0.8" fill="#333"/><path d="M68,6 l3.5,-3.5 v2 h1.5 a3.5,3.5 0 0 1 0,7 h-1 v-1.6 h1 a2,2 0 0 0 0,-4 h-1.5 v2 z" fill="#f4f4f4" stroke="#444" stroke-width="0.9"/><path d="M95,6 l-3.5,-3.5 v2 h-1.5 a3.5,3.5 0 0 0 0,7 h1 v-1.6 h-1 a2,2 0 0 1 0,-4 h1.5 v2 z" fill="#e4e4e4" stroke="#b8b8b8" stroke-width="0.9"/><rect x="108" y="5" width="9.5" height="5" rx="1.2" fill="#fff" stroke="#333" stroke-width="1.1"/><rect x="110" y="2.5" width="5.5" height="3" fill="#fff" stroke="#333" stroke-width="0.9"/><rect x="110" y="8.5" width="5.5" height="3" fill="#fff" stroke="#333" stroke-width="0.9"/><rect x="122.5" y="1" width="0.8" height="13" fill="#c2c2c2"/><rect x="187.2" y="1" width="0.8" height="13" fill="#c2c2c2"/><rect x="125.5" y="5" width="9" height="1" fill="#8a8a8a"/><rect x="125.5" y="8" width="9" height="1" fill="#8a8a8a"/><rect x="125.5" y="4" width="1" height="6" fill="#9a9a9a"/><rect x="133.5" y="4" width="1" height="6" fill="#9a9a9a"/><path d="M147,11 L156,2" stroke="#222" stroke-width="1.2"/><circle cx="147.5" cy="10.5" r="1" fill="#222"/><circle cx="155.5" cy="2.5" r="1" fill="#222"/><path d="M161,10 l2,-4 l3,-3 a3,3 0 1 1 1,5 l-3,2 z" fill="#f2f2f2" stroke="#444" stroke-width="0.9"/><text x="165" y="8.5" font-family="Liberation Sans" font-size="5" font-weight="bold" fill="#333">1</text><text x="174.5" y="10.8" font-family="Liberation Sans" font-weight="bold" font-size="11" fill="#222">A</text><path d="M192.5,6 l4,-3.5 l4.5,3.5 v4 l-4.5,1.5 l-4,-1.5 z" fill="#eaeaea" stroke="#333" stroke-width="1"/><path d="M192.5,6 l4.5,2 l4,-2 M197,8 v3.5" fill="none" stroke="#333" stroke-width="0.8"/><path d="M213,6.5 l3.5,-3.5 l3.5,3.5 l-3.5,3.5 z" fill="#f4f4f4" stroke="#999" stroke-width="0.9"/><rect x="224.5" y="0.5" width="13.5" height="13" fill="#bcd7f3" stroke="#6fa6dc" stroke-width="1"/><rect x="227" y="3" width="3" height="2" fill="#1f3b5a"/><rect x="227" y="6.5" width="3" height="2" fill="#1f3b5a"/><rect x="227" y="10" width="3" height="1.5" fill="#1f3b5a"/><rect x="231" y="3.5" width="5" height="0.8" fill="#1f3b5a"/><rect x="231" y="7" width="5" height="0.8" fill="#1f3b5a"/><rect x="231" y="10.5" width="5" height="0.8" fill="#1f3b5a"/><rect x="244" y="2" width="8" height="7.5" rx="2" fill="#eee" stroke="#555" stroke-width="1"/><path d="M249,8 l4,4 M253,8 l-4,4" stroke="#d42020" stroke-width="1.4"/><rect x="258" y="2.5" width="8" height="8" fill="#fafafa" stroke="#444" stroke-width="1"/><rect x="262" y="6" width="6.5" height="6" fill="#fafafa" stroke="#444" stroke-width="1"/><rect x="258" y="2.5" width="8" height="2" fill="#444"/><rect x="279" y="4" width="3.5" height="0.8" fill="#333"/><path d="M279,6 h3.5 l-1.75,2.5 z" fill="#333"/><path d="M789.5,4.5 l2.2,2 l-2.2,2 z" fill="#333"/><path d="M900.5,10.5 v-4 l1,-4 h2.5 v3 h1.5 v-3 h2.5 l1,4 v4 h-3.2 v-2.5 h-2.2 v2.5 z" fill="#3a3a3a"/><rect x="901.6" y="7.5" width="1.6" height="2" fill="#f4f4f4"/><rect x="906.3" y="7.5" width="1.6" height="2" fill="#f4f4f4"/><path d="M914.3,10.5 h5.8 M915.5,10.3 l1.5,-2.3 l1.5,2.3" fill="none" stroke="#333" stroke-width="0.9"/><path d="M915.2,3 a5,5 0 0 0 5.3,5.5 z" fill="#f4f4f4" stroke="#333" stroke-width="0.9"/><path d="M917.8,5.5 l3,-2.8" stroke="#333" stroke-width="0.9"/><path d="M931.5,2.2 l1.2,3 h3.1 l-2.5,2 l1,3.2 l-2.8,-1.9 l-2.8,1.9 l1,-3.2 l-2.5,-2 h3.1 z" fill="#f4f4f4" stroke="#222" stroke-width="1"/><path d="M943,4.5 a2.3,2.7 0 0 1 4.6,0 v1.5 a2.3,2.7 0 0 1 -4.6,0 z" fill="#f6f6f6" stroke="#333" stroke-width="0.9"/><path d="M941,10.8 q0.5,-2.5 3,-2.8 h2.6 q2.5,0.3 3,2.8 z" fill="#f6f6f6" stroke="#333" stroke-width="0.9"/><circle cx="1002.6" cy="6.5" r="0.8" fill="#333"/><circle cx="1045.5" cy="6.5" r="0.8" fill="#333"/><path d="M1011.2,2.5 h2.5 l2.1,3 l2.1,-3 h2.5 l-3.3,4.2 l3.3,4.3 h-2.5 l-2.1,-3 l-2.1,3 h-2.5 l3.3,-4.3 z" fill="#1d3f86"/><rect x="1026.5" y="2" width="0.8" height="11" fill="#c2c2c2"/><circle cx="1035" cy="6.5" r="4.3" fill="#f8f8f8" stroke="#1d4f9a" stroke-width="1"/><text x="1032.6" y="9.3" font-family="Liberation Sans" font-weight="bold" font-size="7.5" fill="#1d4f9a">?</text><rect x="1062" y="9.5" width="5.5" height="1.2" fill="#222"/><rect x="1075.5" y="5" width="5" height="5" fill="none" stroke="#222" stroke-width="1"/><path d="M1077,5 v-1.8 h5 v5 h-1.6" fill="none" stroke="#222" stroke-width="1"/><path d="M1089.5,3 l6.5,7 M1096,3 l-6.5,7" stroke="#222" stroke-width="1.2"/><rect x="649" y="18.5" width="8.5" height="6" rx="2" fill="#fafafa" stroke="#444" stroke-width="0.9"/><path d="M651.5,22.8 l1.75,-2 l1.75,2 z" fill="#333"/><path d="M660,20.5 h3 l-1.5,2 z" fill="#333"/><path d="M16.5,34 v10.5 l2.5,-2.3 l2,3.8 l1.5,-0.8 l-2,-3.6 h3.3 z" fill="#fafafa" stroke="#333" stroke-width="0.9"/><path d="M47.2,32.5 q1,-1.5 3,-0.6 q6,3 12.2,3.6 v12.5 q-7,-0.5 -12.5,-3.3 q-2.2,-1 -2.7,-1.4 z" fill="#e8e8e8" stroke="#5a5a5a" stroke-width="1.2"/><path d="M75.5,31.8 h10.7 v13.5 h-1.5" fill="#8e8e8e" stroke="#4a4a4a" stroke-width="1.1"/><path d="M75.5,31.8 l8.5,3 v13 l-8.5,-3 z" fill="#e6e6e6" stroke="#4a4a4a" stroke-width="1.1"/><circle cx="82" cy="42" r="0.6" fill="#555"/><rect x="97" y="31.5" width="14" height="13.5" fill="#f4f4f4" stroke="#606060" stroke-width="1.1"/><rect x="98.5" y="33" width="5" height="5" fill="#8d96a6"/><rect x="104.5" y="33" width="5" height="5" fill="#8d96a6"/><rect x="98.5" y="39" width="5" height="5" fill="#98a0ae"/><rect x="104.5" y="39" width="5" height="5" fill="#98a0ae"/><rect x="96.3" y="45.3" width="16" height="2.6" rx="1" fill="#f4f4f4" stroke="#606060" stroke-width="1"/><path d="M131,34 l2,-2.3 h14 v12.5 l-2,3.5 h-14 z" fill="#eeeeee" stroke="#5a5a5a" stroke-width="1.1"/><path d="M131,34 h7 v6 h7 v8 M138,34 l2,-2.3 M145,40 l2,-2.3 M131,40 h7" fill="none" stroke="#5a5a5a" stroke-width="0.9"/><path d="M145,40 l2,-2.3 v6.5 l-2,3.5 z" fill="#c6c9d0"/><rect x="180.5" y="31.8" width="6" height="16" rx="2.5" fill="#f2f2f2" stroke="#5f5f5f" stroke-width="1.1"/><rect x="182.5" y="34" width="2" height="12" fill="#c8c8c8"/><path d="M213.5,31.8 h16 v8.7 h-8.5 v7.5 h-7.5 z" fill="#eeeeee" stroke="#5f5f5f" stroke-width="1.1" stroke-linejoin="round"/><path d="M215.5,33.8 h12 l-3.5,3.5 h-5 v5 l-3.5,3.5 z" fill="#fbfbfb"/><path d="M228.5,32.5 l-4,4.5 v2.8 h4 z" fill="#a8a8a8"/><path d="M214.2,47.2 l4,-4.5 h2.5 v4.8 z" fill="#b8b8b8"/><path d="M247,39 l4,-7 h12.5 v15 h-12.5 l-4,1 z" fill="#f0f0f0" stroke="#8a8a8a" stroke-width="1"/><path d="M247,39 l4,-4.5 h12.5 l-2,4.5 z" fill="#8fc3ee" stroke="#3d7fc8" stroke-width="1"/><path d="M247,39 v9 l4,-1 v-8 z" fill="#c8c8c8"/><path d="M296,40 l4,-8 h12 v8.5 l-4,7 h-12 z" fill="#e6e6e6" stroke="#8a8a8a" stroke-width="1"/><path d="M296,47.5 l4,-7 h12 l-4,7 z" fill="#a6d3f5" stroke="#3d7fc8" stroke-width="1"/><path d="M351,32 h16.5 v13 l-3,3 q-7,0 -13.5,-4 z" fill="#eaf3fb" stroke="#444" stroke-width="0.9"/><path d="M354.5,33 v13" stroke="#2d5f95" stroke-width="1.3"/><path d="M358,33 v13" stroke="#2d5f95" stroke-width="1.3"/><path d="M361.5,33 v13" stroke="#2d5f95" stroke-width="1.3"/><path d="M351.5,35 q6,3 13,3" fill="none" stroke="#2d5f95" stroke-width="1.3"/><path d="M351.5,39 q6,3 13,3" fill="none" stroke="#2d5f95" stroke-width="1.3"/><path d="M351.5,43 q6,3 13,3" fill="none" stroke="#2d5f95" stroke-width="1.3"/><rect x="398.5" y="32.8" width="15.5" height="14.3" rx="1" fill="#fafafa" stroke="#777" stroke-width="1.1"/><path d="M399,36 h14.5 M399,39.5 h14.5 M399,43 h14.5" stroke="#8fb8e6" stroke-width="1"/><path d="M406,33 v14" stroke="#5a8fcf" stroke-width="1.1"/><rect x="440" y="32.8" width="14.5" height="14.3" rx="1" fill="#fafafa" stroke="#777" stroke-width="1.1"/><path d="M440.5,36 h13.5 M440.5,39.5 h13.5 M440.5,43 h13.5" stroke="#275a95" stroke-width="1.5"/><path d="M446.5,33 v14" stroke="#7fb3e8" stroke-width="2"/><rect x="482" y="32" width="14.2" height="11" fill="#4a8ad8"/><rect x="482" y="32" width="14.2" height="1.8" fill="#2a5ea8"/><path d="M485.5,35 v6.5 M489,35 v6.5 M492.5,35 v6.5" stroke="#d8e8f8" stroke-width="0.9"/><path d="M482,38.2 h14.2" stroke="#2a5ea8" stroke-width="0.8"/><rect x="482" y="43" width="14.2" height="1.8" fill="#a0a0a0"/><path d="M489.5,48.3 l1,-2.7 l6,-6 l1.7,1.7 l-6,6 z" fill="#efc53c" stroke="#5a5a5a" stroke-width="0.8"/><path d="M521.3,44.3 l10.5,-12 l5.3,5 v3.5 l-11,7.2 z" fill="#fafafa" stroke="#3a3a3a" stroke-width="1.1" stroke-linejoin="round"/><path d="M526.1,48 l11,-7.2 v-3.5 l-11,7.5 z" fill="#b8b8b8"/><path d="M521.3,44.3 l4.8,3.7 M526.1,44.8 l11,-7.5" stroke="#3a3a3a" stroke-width="0.8" fill="none"/><path d="M550.5,41.5 l4,-3.5 l2,-2 l2.5,-2 l3,-1.8 q3,0 4.5,3 l0,3.5 l-8,6.5 l-3,2.5 h-2 l-3,-2.5 z" fill="#ececec" stroke="#3a3a3a" stroke-width="1.1" stroke-linejoin="round"/><path d="M552.5,43.5 l8,-6.5 M555.5,46 l8,-6.5 M556,36 l3,2.5 M559,34 l3,2.5 M553,39.5 l3,2.5" stroke="#555" stroke-width="0.8" fill="none"/><path d="M581.5,39.5 l4,-8 l4,8 M583.5,36 h4 M581.5,39.5 l2,-2 M589.5,39.5 l-2,-2" fill="none" stroke="#4a4a4a" stroke-width="1.1"/><path d="M582,45.5 v8 M582,46 q5,0 5,5 q0,2.5 3,2.5" fill="none" stroke="#4a4a4a" stroke-width="1"/><circle cx="582" cy="45.8" r="0.9" fill="#333"/><circle cx="582" cy="53.3" r="0.9" fill="#333"/><path d="M583,59.5 h-1.5 v8.5 h1.5 M588.5,59.5 h1.5 v8.5 h-1.5" fill="none" stroke="#4a4a4a" stroke-width="1"/><circle cx="585.8" cy="63.8" r="2.4" fill="none" stroke="#4a4a4a" stroke-width="1"/><path d="M644.7,63.5 h2.6 l-1.3,1.8 z" fill="#333"/><path d="M732.7,63.5 h2.6 l-1.3,1.8 z" fill="#333"/><path d="M819.7,35.5 h2.6 l-1.3,1.8 z" fill="#333"/><path d="M809.7,63.5 h2.6 l-1.3,1.8 z" fill="#333"/><path d="M28.5,75.5 h4 l-2,2.3 z" fill="#333"/><path d="M770.5,75.5 h4 l-2,2.3 z" fill="#333"/><path d="M53.8,61.5 h2.4 l-1.2,1.6 z" fill="#333"/><path d="M137.8,61.5 h2.4 l-1.2,1.6 z" fill="#333"/><path d="M182.3,61.5 h2.4 l-1.2,1.6 z" fill="#333"/><path d="M220.8,61.5 h2.4 l-1.2,1.6 z" fill="#333"/><path d="M303.3,61.5 h2.4 l-1.2,1.6 z" fill="#333"/><path d="M488.8,61.5 h2.4 l-1.2,1.6 z" fill="#333"/><rect x="656.5" y="31.8" width="8.5" height="8.5" fill="none" stroke="#d4d4d4" stroke-width="1"/><path d="M658.5,33.5 h4 v5 h-4" fill="none" stroke="#d4d4d4" stroke-width="0.8"/><rect x="656.5" y="45.5" width="8.5" height="9" fill="#dceaf8" stroke="#3a3a3a" stroke-width="1"/><path d="M657.5,53.5 l6,-6 M657.5,47 l6,6" stroke="#2f78c8" stroke-width="1.5"/><path d="M661,48.5 l4,-3.5" stroke="#e3a62a" stroke-width="1.6"/><rect x="656.5" y="59.3" width="8.5" height="8.8" fill="#dceaf8" stroke="#3a3a3a" stroke-width="1"/><path d="M657.5,60.5 l6,5" stroke="#2f78c8" stroke-width="1.6"/><rect x="659.5" y="65" width="5.5" height="3" fill="#f8f8f8" stroke="#3a3a3a" stroke-width="0.7"/><rect x="753" y="32" width="8.5" height="8" fill="#ede29a" stroke="#3a3a3a" stroke-width="1.1"/><path d="M754,33 l6.5,6 M760.5,33 l-6.5,6" stroke="#8a7a2a" stroke-width="0.9"/><rect x="753" y="45.5" width="8.5" height="8.5" fill="none" stroke="#d8d8d8" stroke-width="1"/><path d="M755,52 l5,-5" stroke="#d8d8d8" stroke-width="1"/><rect x="753" y="59.5" width="8.5" height="8" fill="#ede29a" stroke="#3a3a3a" stroke-width="1.1"/><path d="M754,60.5 l6,5" stroke="#8a7a2a" stroke-width="0.9"/><rect x="756.5" y="65" width="5.5" height="3" fill="#f4f4f4" stroke="#3a3a3a" stroke-width="0.7"/><path d="M840,36 l3.5,-3.5 q1.2,-0.8 2.5,0 l1.3,1.3 q0.8,1.2 0,2.5 l-3.5,3.5 z" fill="#8e8e8e"/><path d="M831.8,44 l3.5,-3.5 l3.8,3.8 l-3.5,3.5 q-1.2,0.8 -2.5,0 l-1.3,-1.3 q-0.8,-1.2 0,-2.5 z" fill="#8e8e8e"/><path d="M833,33.5 l11.5,11.8" stroke="#3a86d4" stroke-width="1.1"/><circle cx="833" cy="33.5" r="1" fill="#3a86d4"/><circle cx="844.5" cy="45.3" r="1" fill="#3a86d4"/><rect x="852.5" y="34" width="5" height="4.5" fill="#8f8f8f"/><rect x="852.5" y="40.5" width="5" height="4.5" fill="#8f8f8f"/><rect x="864" y="34" width="5" height="4.5" fill="#8f8f8f"/><rect x="864" y="40.5" width="5" height="4.5" fill="#8f8f8f"/><path d="M860.7,32.5 v15" stroke="#3a86d4" stroke-width="1.1"/><circle cx="860.7" cy="32.5" r="0.9" fill="#3a86d4"/><circle cx="860.7" cy="47.5" r="0.9" fill="#3a86d4"/><path d="M876.5,36.5 h8" stroke="#3a86d4" stroke-width="1"/><rect x="878.5" y="32.3" width="4" height="2.5" fill="#555"/><rect x="878.5" y="38.5" width="4" height="2.5" fill="#555"/><path d="M877,47 l3,2 v3 l-3,-2 z M880,50 l4,2.5" fill="#888" stroke="#444" stroke-width="0.9"/><path d="M881,46 l1.5,8.5" stroke="#3a86d4" stroke-width="0.9"/><path d="M877,67.5 l2,-4.5 h3 l2,-3.5" fill="none" stroke="#c27a84" stroke-width="1.3"/><circle cx="884.3" cy="59.5" r="1" fill="#a85a66"/><path d="M944,42.5 h3 M949,40 l2.5,2.5 l-2.5,2.5 l-2.5,-2.5 z" fill="#d0d0d0" stroke="#cfcfcf" stroke-width="1"/><path d="M946,52.5 v8.5 M950,52.5 v8.5 M943.5,55 h8.5 M943.5,58.5 h8.5" fill="none" stroke="#d6d6d6" stroke-width="1"/><path d="M994,35 l13,-3 v13 l-13,3 z" fill="#6fb1ec" stroke="#3f7fc9" stroke-width="1"/><path d="M998.5,34 v13 M1002.5,33 v13 M994,39 l13,-3 M994,43.5 l13,-3" stroke="#d9ecfb" stroke-width="0.8"/><path d="M991.5,37 l2.5,-2 v13 l-2.5,-2 z" fill="#f4f4f4" stroke="#666" stroke-width="0.8"/><rect x="1014.5" y="31.8" width="8" height="8.5" fill="#d6d6d6" stroke="#5a5a5a" stroke-width="1"/><path d="M1017,32 v8 M1020,32 v8 M1014.5,35 h8 M1014.5,37.5 h8" stroke="#5a5a5a" stroke-width="0.6"/><circle cx="1022.5" cy="38" r="2" fill="#f5c842"/><path d="M1015,54 l3,-8 h6 l-3,8 z" fill="#eeeeee" stroke="#d2d2d2" stroke-width="1"/><rect x="1014.5" y="59.3" width="9" height="8.5" fill="#3f8a3f" stroke="#4a4a4a" stroke-width="1"/><path d="M1016,61 l6,5" stroke="#b8e0b0" stroke-width="1.2"/></svg>
<svg class="r" style="left:0px;top:0px;pointer-events:none;" width="190" height="619" viewBox="0 0 190 619"><path d="M179,100.5 l4,4 M183,100.5 l-4,4" stroke="#111" stroke-width="1.3"/><path d="M179,348.5 l4,4 M183,348.5 l-4,4" stroke="#111" stroke-width="1.3"/><polygon points="13.5,128.8 16.5,125.5 21.5,131.5 21,138.2 14.2,135.8" fill="#fbfbfb" stroke="#444" stroke-width="0.9" stroke-linejoin="round"/><polygon points="21.5,131.8 29,128.5 28.7,135.2 21,138.2" fill="#d9dde2" stroke="#444" stroke-width="0.9" stroke-linejoin="round"/><polygon points="16.5,125.3 23.5,122.2 29.7,128.3 21.5,131.8" fill="#ececec" stroke="#444" stroke-width="0.9" stroke-linejoin="round"/><rect x="16.7" y="132.2" width="2" height="3.6" fill="#222"/><path d="M180,130.5 h3 l-1.5,1.8 z" fill="#222"/><path d="M114.8,157 l1.7,1.7 l1.7,-1.7" fill="none" stroke="#555" stroke-width="0.8"/><rect x="125.5" y="153.5" width="3.5" height="3.8" fill="#fff" stroke="#555" stroke-width="0.8"/><rect x="125.5" y="158" width="3.5" height="3.8" fill="#fff" stroke="#555" stroke-width="0.8"/><rect x="130" y="153.5" width="3.5" height="8.3" fill="#8fb0d6" stroke="#555" stroke-width="0.8"/><path d="M168,169.5 l1.5,-1.3 l1.5,1.3 M168,171.8 l1.5,-1.3 l1.5,1.3" fill="none" stroke="#222" stroke-width="0.8"/><path d="M168,283.2 l1.5,-1.3 l1.5,1.3 M168,285.5 l1.5,-1.3 l1.5,1.3" fill="none" stroke="#222" stroke-width="0.8"/><path d="M178.3,172 l2,-2 l2,2" fill="none" stroke="#333" stroke-width="0.9"/><path d="M178.3,322 l2,2 l2,-2" fill="none" stroke="#333" stroke-width="0.9"/><path d="M178.3,364 l2,-2 l2,2" fill="none" stroke="#333" stroke-width="0.9"/><path d="M178.3,582 l2,2 l2,-2" fill="none" stroke="#333" stroke-width="1.2"/><path d="M5.5,359 v229 M17.3,359 v22 M17.3,387 v201 M29.3,359 v5 M29.3,389 v199" stroke="#dadada" stroke-width="0.8"/><rect x="15" y="381.8" width="4.8" height="4.8" fill="#fff" stroke="#a8a8a8" stroke-width="0.7"/><path d="M15.8,384.2 h3.2" stroke="#555" stroke-width="0.7"/><path d="M20,384.2 h5" stroke="#dadada" stroke-width="0.8"/><path d="M29.3,362.6 h7" stroke="#d8d8d8" stroke-width="0.8"/><path d="M29.3,372.9 h7" stroke="#d8d8d8" stroke-width="0.8"/><path d="M29.3,393.6 h7" stroke="#d8d8d8" stroke-width="0.8"/><path d="M29.3,404.0 h7" stroke="#d8d8d8" stroke-width="0.8"/><path d="M29.3,414.3 h7" stroke="#d8d8d8" stroke-width="0.8"/><path d="M29.3,424.6 h7" stroke="#d8d8d8" stroke-width="0.8"/><path d="M29.3,435.0 h7" stroke="#d8d8d8" stroke-width="0.8"/><path d="M29.3,445.3 h7" stroke="#d8d8d8" stroke-width="0.8"/><path d="M29.3,455.7 h7" stroke="#d8d8d8" stroke-width="0.8"/><path d="M29.3,466.0 h7" stroke="#d8d8d8" stroke-width="0.8"/><path d="M29.3,476.3 h7" stroke="#d8d8d8" stroke-width="0.8"/><path d="M29.3,486.7 h7" stroke="#d8d8d8" stroke-width="0.8"/><path d="M29.3,497.0 h7" stroke="#d8d8d8" stroke-width="0.8"/><path d="M29.3,507.4 h7" stroke="#d8d8d8" stroke-width="0.8"/><path d="M29.3,517.7 h7" stroke="#d8d8d8" stroke-width="0.8"/><path d="M29.3,528.0 h7" stroke="#d8d8d8" stroke-width="0.8"/><path d="M29.3,538.4 h7" stroke="#d8d8d8" stroke-width="0.8"/><path d="M29.3,548.7 h7" stroke="#d8d8d8" stroke-width="0.8"/><path d="M29.3,559.1 h7" stroke="#d8d8d8" stroke-width="0.8"/><path d="M29.3,569.4 h7" stroke="#d8d8d8" stroke-width="0.8"/><path d="M29.3,579.7 h7" stroke="#d8d8d8" stroke-width="0.8"/><path d="M29.3,359 v14.5" stroke="#dadada" stroke-width="0.8"/></svg>
<svg class="r" style="left:0px;top:0px;pointer-events:none;" width="1100" height="619" viewBox="0 0 1100 619"><rect x="1060" y="105.5" width="7" height="2.2" fill="#666"/><rect x="1070.5" y="103" width="6" height="6" rx="1" fill="#fafafa" stroke="#666" stroke-width="1"/><rect x="1072" y="105" width="3" height="4" fill="#777"/><path d="M1080.5,103 l5.5,5.5 M1086,103 l-5.5,5.5" stroke="#666" stroke-width="1.6"/><path d="M1080.5,103 l5.5,5.5 M1086,103 l-5.5,5.5" stroke="#fff" stroke-width="0.5"/><path d="M1092.5,106 l2,-2 l2,2" fill="none" stroke="#333" stroke-width="0.9"/><path d="M1092.5,571 l2,2 l2,-2" fill="none" stroke="#333" stroke-width="0.9"/><path d="M1085,581 l2,2 l-2,2" fill="none" stroke="#333" stroke-width="0.9"/><path d="M407,580.5 l-2,2 l2,2" fill="none" stroke="#222" stroke-width="1"/><ellipse cx="1037.4" cy="183.2" rx="36.5" ry="22.3" fill="#f2f2f2" stroke="#d2d2d2" stroke-width="0.8"/><ellipse cx="1037.4" cy="182.8" rx="28.3" ry="13.2" fill="#ffffff" stroke="#d8d8d8" stroke-width="0.8"/><ellipse cx="1041" cy="186" rx="15" ry="5" fill="#ececec"/><polygon points="1020.9,148.6 1047.4,146 1055.2,160.2 1025.4,164.1" fill="#f0f0f0" stroke="#a4a4a4" stroke-width="0.7"/><polygon points="1025.4,164.1 1055.2,160.2 1055,184.5 1027.3,187" fill="#e6e6e6" stroke="#a4a4a4" stroke-width="0.7"/><polygon points="1020.9,148.6 1025.4,164.1 1027.3,187 1022.5,176" fill="#d4d4d4" stroke="#a4a4a4" stroke-width="0.7"/><text x="1026" y="158" font-family="Liberation Sans" font-size="6" fill="#7a7a7a" transform="rotate(-5 1038 155)">Сверху</text><text x="1027.5" y="177.5" font-family="Liberation Sans" font-size="7" fill="#6a6a6a" transform="rotate(-4 1040 175)">Спереди</text><text x="999" y="186.5" font-family="Liberation Sans" font-size="7" fill="#999">З</text><text x="1067" y="176.5" font-family="Liberation Sans" font-size="7" fill="#999">В</text><text x="1039" y="205.5" font-family="Liberation Sans" font-size="7.5" fill="#999">Ю</text><rect x="1069" y="213" width="19.5" height="67" rx="2.5" fill="#f6f6f6" stroke="#b8b8b8" stroke-width="0.9"/><circle cx="1084.3" cy="216.8" r="1.8" fill="#e4e4e4" stroke="#9a9a9a" stroke-width="0.8"/><circle cx="1084.3" cy="275.5" r="1.8" fill="#e4e4e4" stroke="#9a9a9a" stroke-width="0.8"/><circle cx="1078.7" cy="230.8" r="5.8" fill="#f2f2f2" stroke="#a0a0a0" stroke-width="0.9"/><circle cx="1078.7" cy="230.8" r="3.4" fill="#fafafa" stroke="#a8a8a8" stroke-width="0.8"/><path d="M1077.7,242 h2 l-1,1 z" fill="#555"/><path d="M1077.7,266 h2 l-1,1 z" fill="#555"/><path d="M1072,246 h14" stroke="#e0e0e0" stroke-width="0.7"/><rect x="1074.5" y="250.8" width="5" height="5" fill="#a9d49f"/><path d="M1074.5,252.5 h5 M1074.5,254 h5" stroke="#d8ecd2" stroke-width="0.5"/><circle cx="1080.3" cy="256.5" r="1.6" fill="none" stroke="#777" stroke-width="0.7"/><path d="M1081.3,257.5 l1.5,1.5" stroke="#777" stroke-width="0.8"/><rect x="1090" y="333" width="7.5" height="9.5" fill="#cdcdcd"/><rect x="740" y="579" width="11" height="8" fill="#d2d2d2"/></svg>
<div class="t" style="left:203px;top:580.12px;font-size:6.5px;line-height:6.5px;color:#222;font-weight:normal;font-style:normal;letter-spacing:-0.184px;">1 : 100</div>
<svg class="r" style="left:0px;top:0px;pointer-events:none;" width="1100" height="619" viewBox="0 0 1100 619"><g transform="translate(237.5,582.5)"><rect x="-4.5" y="-3.5" width="9" height="7" fill="#e6e6e6" stroke="#555" stroke-width="0.9"/><path d="M-4.5,-1.5 h9" stroke="#999" stroke-width="0.6"/></g><g transform="translate(250.5,582.5)"><rect x="-4.5" y="-2.5" width="7.5" height="6" rx="1" fill="#f4f4f4" stroke="#555" stroke-width="0.9"/><path d="M-2.5,-2.5 v-1.5 h7 v5.5 h-1.5" fill="none" stroke="#555" stroke-width="0.8"/></g><g transform="translate(263.5,582.5)"><circle cx="-1.5" cy="-0.5" r="3" fill="#f3c33a"/><path d="M0,0 l3.5,3.5 M3.5,0 l-3.5,3.5" stroke="#d4302a" stroke-width="1.2"/></g><g transform="translate(274,582.5)"><circle cx="0" cy="-1.2" r="2.5" fill="#cfe4f6" stroke="#2f78c8" stroke-width="0.9"/><path d="M-2.5,3 h5" stroke="#2f78c8" stroke-width="1"/></g><g transform="translate(286,582.5)"><path d="M-4.5,-1 l3,-2 l3,2 l-3,3 z" fill="none" stroke="#666" stroke-width="0.8"/><circle cx="2" cy="1" r="2" fill="#2f78c8"/></g><g transform="translate(298.5,582.5)"><path d="M-4.5,0.5 l4,-3 l4,3 l-4,3 z" fill="#2f6fb8"/><path d="M0.5,-1.5 l4,4 M4.5,-1.5 l-4,4" stroke="#d4302a" stroke-width="1.2"/></g><g transform="translate(310,582.5)"><path d="M-4.5,0.5 l4,-3 l4,3 l-4,3 z" fill="#2f6fb8"/><circle cx="3" cy="0.5" r="2" fill="#2f78c8"/></g><g transform="translate(322.5,582.5)"><path d="M-4,-1 l4,-3 l4,3 v4.5 h-8 z" fill="#f4f4f4" stroke="#555" stroke-width="0.9"/><rect x="-0.5" y="0.5" width="4" height="3.5" fill="#6ab06a"/></g><g transform="translate(335,582.5)"><path d="M-4.5,0 q2,-3.5 4.5,0 q2.5,3.5 4.5,0" fill="none" stroke="#666" stroke-width="0.9"/><circle cx="0" cy="-2" r="1" fill="#888"/></g><g transform="translate(346.5,582.5)"><path d="M0,-3.5 a2,2 0 0 1 2,2 q0,2 -2,4 q-2,-2 -2,-4 a2,2 0 0 1 2,-2" fill="#2f78c8"/></g><g transform="translate(359,582.5)"><rect x="-4.5" y="-3" width="8" height="6" fill="#f4f4f4" stroke="#333" stroke-width="0.9"/><circle cx="2.5" cy="1.5" r="1.6" fill="#fff" stroke="#333" stroke-width="0.8"/></g><g transform="translate(370.5,582.5)"><path d="M-4.5,-0.5 l4,-3 l4,3 v3.5 h-8 z" fill="#c85a5a" stroke="#555" stroke-width="0.7"/><circle cx="3" cy="0.5" r="2" fill="#2f78c8"/></g><g transform="translate(382,582.5)"><rect x="-4.5" y="-2.5" width="6" height="5.5" fill="#dcdcdc" stroke="#555" stroke-width="0.8"/><rect x="-1.5" y="-3.5" width="5" height="5.5" fill="#eeeeee" stroke="#555" stroke-width="0.8"/></g><g transform="translate(394.5,582.5)"><path d="M-4.5,-3.5 v7 M-4.5,-2 h9 v5 h-9" fill="none" stroke="#555" stroke-width="0.9"/><rect x="-0.5" y="-0.5" width="3" height="3" fill="#555"/></g><rect x="188" y="577" width="1.3" height="11" fill="#6e6e6e"/></svg>
<div class="t" style="left:1.5px;top:593.07px;font-size:6.6px;line-height:6.6px;color:#1e1e1e;font-weight:normal;font-style:normal;letter-spacing:0.069px;">Щелчок - выбор, TAB - варианты, CTRL - добавление, SHIFT - снятие выбора.</div>
<div class="r" style="left:467.5px;top:590px;width:117.5px;height:10.5px;background:#ffffff;"></div>
<div class="r" style="left:648px;top:590px;width:118px;height:10.5px;background:#ffffff;"></div>
<div class="t" style="left:650.5px;top:593.12px;font-size:6.5px;line-height:6.5px;color:#9a9a9a;font-weight:normal;font-style:normal;letter-spacing:0.017px;">Главная модель</div>
<svg class="r" style="left:0px;top:0px;pointer-events:none;" width="1100" height="619" viewBox="0 0 1100 619"><path d="M455,598.5 v-4 a2,2 0 0 1 4,0 v4 M459,598.5 v-3 a1.8,1.8 0 0 1 3.6,0 v3" fill="none" stroke="#8a8a8a" stroke-width="1.1"/><path d="M580,594 l1.5,1.5 l1.5,-1.5" fill="none" stroke="#999" stroke-width="0.7"/><path d="M762,594 l1.5,1.5 l1.5,-1.5" fill="none" stroke="#999" stroke-width="0.7"/><path d="M591,599 l4,-7 h2.5 l-4,7 z" fill="#bdbdbd"/><text x="598" y="598" font-family="Liberation Sans" font-size="6" fill="#333">:0</text><rect x="620.5" y="590.5" width="9" height="9" fill="#f4f4f4" stroke="#333" stroke-width="1"/><path d="M620.5,593 h9 M623,593 v6.5" stroke="#333" stroke-width="0.8"/><rect x="636" y="591" width="8" height="8" fill="#a8a8a8"/><circle cx="962" cy="593" r="1.6" fill="#f3c33a"/><rect x="962" y="594" width="3.5" height="5" fill="#9a9a9a"/><path d="M964.5,591 l3,3 M967.5,591 l-3,3" stroke="#d4302a" stroke-width="1"/><path d="M974,598 l3,-4 h4 v4 z" fill="#4a8fd6"/><path d="M980.5,591 l3,3 M983.5,591 l-3,3" stroke="#d4302a" stroke-width="1"/><rect x="979" y="596" width="3" height="3" fill="#777"/><rect x="989" y="591" width="5" height="6" fill="#f0a060"/><rect x="994" y="595" width="3" height="4" fill="#666"/><path d="M993,591 l3,3 M996,591 l-3,3" stroke="#d4302a" stroke-width="1"/><rect x="1005" y="592" width="5" height="7" fill="#4a8fd6"/><path d="M1009.5,591 l3,3 M1012.5,591 l-3,3" stroke="#d4302a" stroke-width="1"/><rect x="1010" y="596" width="3" height="3" fill="#777"/><path d="M1019,593 h4 M1021,591 v4" stroke="#222" stroke-width="1.1"/><path d="M1023,594 l3,4 l1,-2 z" fill="#555"/><circle cx="1038" cy="595" r="2.8" fill="none" stroke="#bdbdbd" stroke-width="1.3"/><path d="M1047,591.5 h9 l-3.5,4 v4 l-2,-1 v-3 z" fill="#e6e6e6" stroke="#777" stroke-width="0.9"/><text x="1057" y="598" font-family="Liberation Sans" font-size="6" fill="#333">:0</text></svg>
<svg class="r" style="left:0px;top:0px;pointer-events:none;" width="1100" height="619" viewBox="0 0 1100 619"><rect x="296.5" y="602" width="20.5" height="17" fill="#3b2929"/><rect x="151" y="617.5" width="16" height="1.5" fill="#e7a6a6"/><rect x="172" y="617.5" width="16" height="1.5" fill="#e7a6a6"/><rect x="235" y="617.5" width="17" height="1.5" fill="#e7a6a6"/><rect x="256" y="617.5" width="16" height="1.5" fill="#e7a6a6"/><rect x="278" y="617.5" width="16" height="1.5" fill="#e7a6a6"/><rect x="297" y="617.5" width="20" height="1.5" fill="#e7a6a6"/><rect x="5.5" y="606" width="4" height="4" fill="#fff"/><rect x="10" y="605.3" width="5" height="4.7" fill="#fff"/><rect x="5.5" y="610.5" width="4" height="4" fill="#fff"/><rect x="10" y="610.5" width="5" height="4.7" fill="#fff"/><circle cx="33.5" cy="608.5" r="2.8" fill="none" stroke="#e8e8e8" stroke-width="0.9"/><path d="M31.5,610.5 l-3.5,4" stroke="#e8e8e8" stroke-width="1"/><rect x="48" y="606" width="6.5" height="8.5" rx="1" fill="none" stroke="#d8d8d8" stroke-width="0.9"/><path d="M46,607.5 v5.5 M56.5,607.5 v5.5" stroke="#bbb" stroke-width="0.8"/><rect x="70" y="605.8" width="6.5" height="9.5" rx="0.6" fill="#f0f0f0"/><rect x="71" y="606.8" width="4.5" height="1.5" fill="#333"/><path d="M71,610 h4.5 M71,612 h4.5 M72.5,609 v5.5 M74,609 v5.5" stroke="#c8c8c8" stroke-width="0.5"/><path d="M91,607 h2 v-1.2 h1 v1.2 h2.5 v-1.2 h1 v1.2 h2 v8 h-8.5 z" fill="#d8c8c8"/><rect x="92" y="609" width="6.5" height="5" fill="#3a2a2a"/><rect x="94.5" y="610.5" width="3" height="2.2" fill="#8a7a7a"/><path d="M112,605.5 l9,-0.5 v9.5 l-9,0.5 z" fill="#1f7ad8"/><circle cx="116.5" cy="610" r="2.8" fill="#e8f2fc"/><path d="M114.8,610 h3.4" stroke="#1f7ad8" stroke-width="0.9"/><path d="M134.2,611 h5.8 a3.3,3.5 0 1 0 -1,2.7" fill="none" stroke="#1e88e5" stroke-width="1.8"/><circle cx="158" cy="610" r="4.5" fill="#d9412f"/><path d="M158,610 L158,605.5 A4.5,4.5 0 0 1 162,612.2 Z" fill="#f6c02c"/><path d="M158,610 L162,612.2 A4.5,4.5 0 0 1 153.8,611.8 Z" fill="#3aa757"/><circle cx="158" cy="610" r="1.8" fill="#4a8ef0" stroke="#fff" stroke-width="0.6"/><path d="M174.5,606 h4 l1,1 h6 v8 h-11 z" fill="#f5d76e"/><rect x="176" y="610" width="8" height="4" fill="#5aa0d8"/><circle cx="201" cy="610" r="4.5" fill="#2ca5e0"/><path d="M198.5,610 l5,-2 l-1,4.5 l-1.5,-1.5 z" fill="#fff"/><circle cx="222" cy="609.5" r="4.5" fill="#7c60c8"/><circle cx="222" cy="609.5" r="2.6" fill="none" stroke="#fff" stroke-width="0.8"/><path d="M220,613.5 l-1,2 l3,-1.5" fill="#7c60c8"/><rect x="239" y="605" width="9" height="10" fill="#e8f4f2"/><text x="240.8" y="613.5" font-family="Liberation Sans" font-weight="bold" font-size="8.5" fill="#1a9a8a">3</text><rect x="259.5" y="607.5" width="10" height="7" rx="1" fill="#6a6a6a"/><circle cx="264.5" cy="611" r="2" fill="#3a3a3a"/><rect x="262" y="606" width="5" height="2" fill="#6a6a6a"/><rect x="281.5" y="605" width="10" height="10" fill="#0a2238" stroke="#31a8ff" stroke-width="0.6"/><text x="282.5" y="612.8" font-family="Liberation Sans" font-weight="bold" font-size="6" fill="#31a8ff">Ps</text><rect x="302" y="605" width="10" height="10" fill="#f2f6fb"/><text x="303.3" y="613.8" font-family="Liberation Sans" font-weight="bold" font-size="9.5" fill="#1f5fa8">R</text><path d="M962.5,611.5 l2.5,-2.5 l2.5,2.5" fill="none" stroke="#e0e0e0" stroke-width="0.9"/><path d="M976.5,607.5 l2,-1.3 l2,1.3 l-2,1.3 z M980.5,607.5 l2,-1.3 l2,1.3 l-2,1.3 z M976.5,610 l2,-1.3 l2,1.3 l-2,1.3 z M980.5,610 l2,-1.3 l2,1.3 l-2,1.3 z" fill="#eee"/><path d="M978.5,612.5 l2,1.3 l2,-1.3" fill="none" stroke="#eee" stroke-width="0.8"/><rect x="989" y="607.5" width="7" height="5" fill="#ddd"/><rect x="996" y="608.8" width="1" height="2.5" fill="#ddd"/><rect x="988.5" y="606.5" width="3" height="1.5" fill="#ddd"/><path d="M1002.5,613.5 a8,8 0 0 1 8,-8 M1004.5,613.5 a6,6 0 0 1 6,-6 M1006.5,613.5 a4,4 0 0 1 4,-4" fill="none" stroke="#bbb" stroke-width="0.7"/><path d="M1016,608.5 h2 l2.5,-2.5 v9 l-2.5,-2.5 h-2 z" fill="none" stroke="#e8e8e8" stroke-width="0.8"/><path d="M1022,608 q1.2,2 0,4 M1023.5,607 q2,3 0,6" fill="none" stroke="#aaa" stroke-width="0.6"/><path d="M1077,606 h8 v6 h-3 l-1,1.5 l-1,-1.5 h-3 z" fill="#f4f4f4"/><path d="M1078.5,607.8 h5 M1078.5,609.3 h5 M1078.5,610.8 h3.5" stroke="#333" stroke-width="0.5"/><rect x="1098" y="602" width="0.8" height="17" fill="#5a4545"/></svg>
<div class="t" style="left:1030px;top:608.07px;font-size:6.6px;line-height:6.6px;color:#e6e6e6;font-weight:normal;font-style:normal;letter-spacing:-0.232px;">ENG</div>
<div class="t" style="left:1051px;top:608.07px;font-size:6.6px;line-height:6.6px;color:#e6e6e6;font-weight:normal;font-style:normal;letter-spacing:-0.183px;">13:12</div>
</body></html>
